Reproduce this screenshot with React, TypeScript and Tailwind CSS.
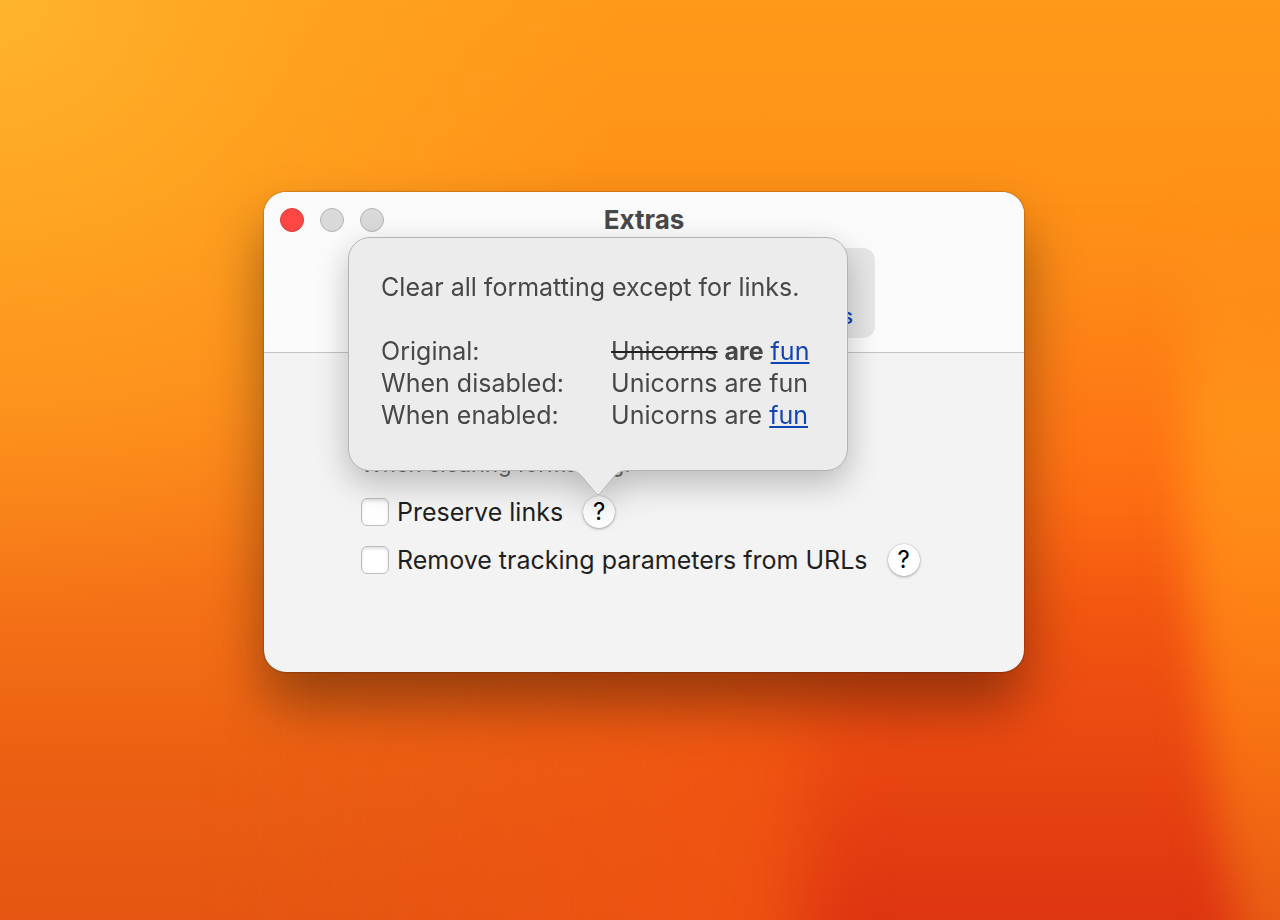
import { useState } from "react";

const link = "text-[#0f45b5] underline decoration-2 underline-offset-2";

function Wallpaper() {
  return (
    <svg className="absolute inset-0 size-full" viewBox="0 0 1280 920" preserveAspectRatio="none" aria-hidden="true">
      <defs>
        <linearGradient id="base" x1="0" y1="0" x2="0" y2="1">
          <stop offset="0" stopColor="#ff991a" />
          <stop offset="0.2" stopColor="#ff9217" />
          <stop offset="0.45" stopColor="#fc8418" />
          <stop offset="0.7" stopColor="#f36d16" />
          <stop offset="0.84" stopColor="#ea5f12" />
          <stop offset="1" stopColor="#e65612" />
        </linearGradient>
        <radialGradient id="glow" gradientUnits="userSpaceOnUse" cx="0" cy="0" r="620">
          <stop offset="0" stopColor="#ffb42e" />
          <stop offset="0.5" stopColor="#ffac26" stopOpacity="0.5" />
          <stop offset="1" stopColor="#ffac26" stopOpacity="0" />
        </radialGradient>
        <linearGradient id="warm" x1="0" y1="0" x2="1" y2="0">
          <stop offset="0" stopColor="#f25012" stopOpacity="0" />
          <stop offset="1" stopColor="#f25012" stopOpacity="0.8" />
        </linearGradient>
        <linearGradient id="flame" gradientUnits="userSpaceOnUse" x1="0" y1="260" x2="0" y2="920">
          <stop offset="0" stopColor="#ff7a14" stopOpacity="0" />
          <stop offset="0.34" stopColor="#ff7013" />
          <stop offset="0.52" stopColor="#f25610" />
          <stop offset="0.76" stopColor="#e94611" />
          <stop offset="1" stopColor="#dd3411" />
        </linearGradient>
        <linearGradient id="edge" gradientUnits="userSpaceOnUse" x1="0" y1="200" x2="0" y2="920">
          <stop offset="0" stopColor="#ff9618" stopOpacity="0" />
          <stop offset="0.3" stopColor="#ff9318" />
          <stop offset="0.5" stopColor="#ff8717" />
          <stop offset="0.72" stopColor="#f97412" />
          <stop offset="1" stopColor="#e85c14" />
        </linearGradient>
        <filter id="soft" filterUnits="userSpaceOnUse" x="0" y="0" width="1500" height="1300" colorInterpolationFilters="sRGB">
          <feGaussianBlur stdDeviation="22" />
        </filter>
        <filter id="softer" filterUnits="userSpaceOnUse" x="0" y="0" width="1500" height="1300" colorInterpolationFilters="sRGB">
          <feGaussianBlur stdDeviation="34" />
        </filter>
      </defs>
      <rect width="1280" height="920" fill="url(#base)" />
      <rect width="1280" height="920" fill="url(#glow)" />
      <rect x="240" y="620" width="620" height="500" fill="url(#warm)" filter="url(#softer)" />
      <path d="M780 1200L815 700L960 240H1340V1200Z" fill="url(#flame)" filter="url(#softer)" />
      <path d="M1185 200H1400V1100H1280Q1205 840 1185 500Z" fill="url(#edge)" filter="url(#soft)" />
    </svg>
  );
}

function HelpButton({ topic, children }: { topic: string; children?: React.ReactNode }) {
  return (
    <span className="relative flex">
      <button
        type="button"
        aria-label={`Help: ${topic}`}
        className="flex size-8 items-center justify-center rounded-full bg-white text-2xl text-black shadow-[0_0_1px_rgba(0,0,0,0.3),0_1px_3px_rgba(0,0,0,0.3)]"
      >
        ?
      </button>
      {children}
    </span>
  );
}

function LinksPopover() {
  return (
    <div
      role="tooltip"
      className="absolute bottom-full -left-[235px] w-[500px] text-[25px] leading-8 text-[#474747] drop-shadow-[0_12px_16px_rgba(0,0,0,0.24)]"
    >
      <div className="rounded-[22px] border border-[#b4b4b4] bg-[#ececec] px-8 pt-[33px] pb-[39px]">
        <p className="whitespace-nowrap">Clear all formatting except for links.</p>
        <table className="mt-8 w-full text-left whitespace-nowrap">
          <tbody>
            <tr>
              <th className="w-[230px] font-normal">Original:</th>
              <td>
                <s className="decoration-[#222] decoration-2">Unicorns</s> <b>are</b> <a href="#fun" className={link}>fun</a>
              </td>
            </tr>
            <tr>
              <th className="font-normal">When disabled:</th>
              <td>Unicorns are fun</td>
            </tr>
            <tr>
              <th className="font-normal">When enabled:</th>
              <td>
                Unicorns are <a href="#fun" className={link}>fun</a>
              </td>
            </tr>
          </tbody>
        </table>
      </div>
      {/* Arrow, overlaps the card border by one pixel */}
      <svg className="mx-auto -mt-px block" width="60" height="26" viewBox="0 0 60 26" aria-hidden="true">
        <path d="M0 0H60V0.5C52 0.5 49 3 46 6.500L31.500 24Q30 25.500 28.500 24L14 6.500C11 3 8 0.500 0 0.500Z" fill="#ececec" />
        <path d="M0 0.500C8 0.500 11 3 14 6.500L28.500 24Q30 25.500 31.500 24L46 6.500C49 3 52 0.500 60 0.500" fill="none" stroke="#b4b4b4" />
      </svg>
    </div>
  );
}

interface OptionProps {
  id: string;
  label: string;
  children?: React.ReactNode;
}

function Option({ id, label, children }: OptionProps) {
  const [checked, setChecked] = useState(false);

  return (
    <div className="flex h-8 items-center gap-5">
      <div className="flex items-center gap-2">
        <input
          id={id}
          type="checkbox"
          checked={checked}
          onChange={(e) => setChecked(e.target.checked)}
          className="size-7 shrink-0 appearance-none rounded-md border border-[#bdbdbd] bg-white shadow-[inset_0_2px_3px_rgba(0,0,0,0.12)] checked:bg-blue-500"
        />
        <label htmlFor={id} className="text-[25px] leading-8 whitespace-nowrap text-[#1f1f1f]">
          {label}
        </label>
      </div>
      <HelpButton topic={label}>{children}</HelpButton>
    </div>
  );
}

export default function App() {
  return (
    <div className="relative flex min-h-screen items-center justify-center overflow-hidden pb-14 pl-2 font-['Inter',sans-serif]">
      <Wallpaper />

      <main className="relative w-full max-w-[760px] rounded-[22px] bg-[#f3f3f3] shadow-[0_0_2px_rgba(0,0,0,0.5),0_32px_56px_rgba(0,0,0,0.38)]">
        <header className="rounded-t-[22px] border-b border-[#c4c4c4] bg-[#fbfbfb]">
          <div className="grid h-14 grid-cols-[1fr_auto_1fr] items-center px-4">
            <div className="flex gap-4">
              <button type="button" aria-label="Close" className="size-6 rounded-full border border-[#dc3a38] bg-[#fe4745]" />
              <button type="button" aria-label="Minimize" className="size-6 rounded-full border border-[#b4b4b4] bg-[#d9d9d9]" />
              <button type="button" aria-label="Zoom" className="size-6 rounded-full border border-[#b4b4b4] bg-[#d9d9d9]" />
            </div>
            <h1 className="text-[26px] leading-8 font-bold text-[#484848]">Extras</h1>
          </div>

          <nav className="flex justify-end pr-[149px] pb-3.5">
            <button
              type="button"
              className="flex h-[90px] items-end rounded-xl bg-[#e6e6e7] px-[22px] pb-1.5 text-[22px] leading-8 font-medium text-[#0f45b5]"
            >
              Extras
            </button>
          </nav>
        </header>

        <section className="flex flex-col gap-4 pt-[95px] pr-8 pb-24 pl-[97px]">
          <h2 className="text-[22px] leading-8 text-[#6a6a6a]">When clearing formatting:</h2>
          <Option id="preserve-links" label="Preserve links">
            <LinksPopover />
          </Option>
          <Option id="remove-tracking" label="Remove tracking parameters from URLs" />
        </section>
      </main>
    </div>
  );
}
